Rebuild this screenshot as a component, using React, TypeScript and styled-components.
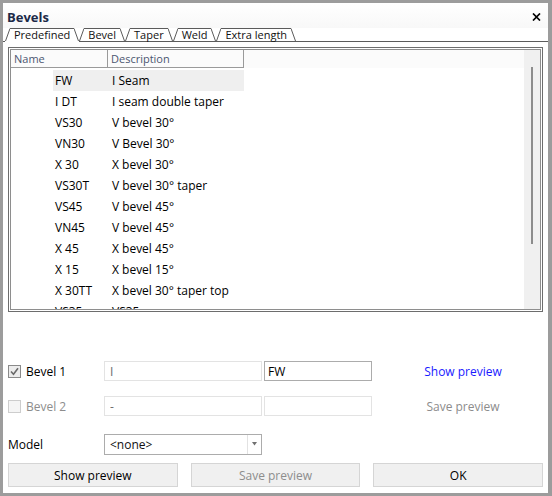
import React from "react";
import styled, { createGlobalStyle } from "styled-components";

const GlobalStyle = createGlobalStyle`
  html, body {
    margin: 0;
    padding: 0;
    background: #fff;
  }
  body {
    font-family: "Open Sans", "Noto Sans", sans-serif;
    font-size: 12px;
    color: #000;
  }
  * {
    box-sizing: border-box;
  }
`

const Window = styled.div`
  width: 552px;
  height: 496px;
  border: 3px solid #9c9c9c;
  border-right-width: 4px;
  background: #fff;
  display: flex;
  flex-direction: column;
`

const TitleBar = styled.div`
  height: 25px;
  display: flex;
  align-items: center;
  justify-content: space-between;
  padding: 2px 7px 0 4px;
  background: linear-gradient(#ffffff, #f8f8f8);
`

const Title = styled.div`
  font-size: 13px;
  font-weight: 700;
  color: #1c2a48;
`

const TabStrip = styled.div`
  height: 14px;
  display: flex;
  align-items: flex-end;
  padding-left: 2px;
  border-bottom: 1px solid #5b5b5b;
`

const TabWrap = styled.div<{ $active?: boolean }>`
  display: flex;
  height: ${p => (p.$active ? "14px" : "13px")};
  margin-bottom: ${p => (p.$active ? "-1px" : "0")};
  background: #fff;
  border-bottom: ${p => (p.$active ? "1px solid #fff" : "none")};
`

const TabLabel = styled.div`
  border-top: 1px solid #5b5b5b;
  padding: 0 4px;
  font-size: 11px;
  line-height: 12px;
  color: #111;
`

const Content = styled.div`
  flex: 1;
  display: flex;
  flex-direction: column;
  padding: 5px 5px 6px 5px;
`

const ListFrame = styled.div`
  height: 265px;
  border: 1px solid #6d6d6d;
  padding: 1px;
`

const ListInner = styled.div`
  height: 100%;
  border: 1px solid #8e8e8e;
  display: flex;
  overflow: hidden;
`

const ListBody = styled.div`
  flex: 1;
  overflow: hidden;
`

const Header = styled.div`
  display: flex;
  height: 18px;
  background: #fbfbfb;
`

const HeaderCell = styled.div<{ $w: number }>`
  width: ${p => p.$w}px;
  height: 18px;
  border-right: 1px solid #9a9a9a;
  border-bottom: 1px solid #9a9a9a;
  padding-left: 3px;
  font-size: 11px;
  line-height: 17px;
  color: #4b5670;
`

const Rows = styled.div`
  padding-top: 2px;
`

const Row = styled.div`
  display: flex;
  height: 21px;
  padding-left: 42px;
`

const RowInner = styled.div<{ $selected?: boolean }>`
  display: flex;
  background: ${p => (p.$selected ? "#efefef" : "transparent")};
  line-height: 21px;
`

const NameCell = styled.div`
  width: 55px;
  padding-left: 2px;
  white-space: nowrap;
`

const DescCell = styled.div`
  width: 136px;
  padding-left: 4px;
  white-space: nowrap;
`

const Scrollbar = styled.div`
  width: 16px;
  background: #f0f0f0;
  padding: 17px 0 0 7px;
`

const Thumb = styled.div`
  width: 2px;
  height: 177px;
  background: #8c8c8c;
`

const Form = styled.div`
  margin-top: 49px;
  display: flex;
  flex-direction: column;
`

const FormRow = styled.div<{ $gap: number }>`
  display: flex;
  align-items: center;
  height: 20px;
  margin-bottom: ${p => p.$gap}px;
`

const CheckLabel = styled.label<{ $disabled?: boolean }>`
  width: 96px;
  display: flex;
  align-items: center;
  gap: 5px;
  color: ${p => (p.$disabled ? "#8d8d8d" : "#000")};
`

const PlainLabel = styled.div`
  width: 96px;
`

const TextBox = styled.input<{ $w: number; $strong?: boolean; $pad: number }>`
  width: ${p => p.$w}px;
  height: 20px;
  margin: 0;
  padding: 0 0 0 ${p => p.$pad}px;
  border: 1px solid ${p => (p.$strong ? "#acacac" : "#e3e3e3")};
  background: #fff;
  font-family: "Open Sans", "Noto Sans", sans-serif;
  font-size: 12px;
  color: ${p => (p.$strong ? "#000" : "#6d6d6d")};
  outline: none;
`

const Gap = styled.div`
  width: 2px;
`

const LinkCell = styled.div`
  flex: 1;
  padding-left: 11px;
  text-align: center;
`

const LinkText = styled.span<{ $disabled?: boolean }>`
  color: ${p => (p.$disabled ? "#8c8c8c" : "#1a1aff")};
  cursor: ${p => (p.$disabled ? "default" : "pointer")};
`

const Select = styled.div`
  width: 158px;
  height: 21px;
  border: 1px solid #acacac;
  display: flex;
  align-items: center;
  background: #fff;
`

const SelectValue = styled.div`
  flex: 1;
  padding-left: 5px;
  color: #111;
`

const SelectArrow = styled.div`
  width: 14px;
  height: 100%;
  border-left: 1px solid #e2e2e2;
  display: flex;
  align-items: center;
  justify-content: center;
`

const ButtonBar = styled.div`
  margin-top: 9px;
  display: grid;
  grid-template-columns: 1fr 1fr 1fr;
  column-gap: 13px;
`

const Button = styled.button<{ $disabled?: boolean }>`
  height: 24px;
  margin: 0;
  border: 1px solid #d5d5d5;
  background: #f0f0f0;
  font-family: "Open Sans", "Noto Sans", sans-serif;
  font-size: 12px;
  color: ${p => (p.$disabled ? "#8d8d8d" : "#000")};
`

const bevels: [string, string][] = [
    ["FW", "I Seam"],
    ["I DT", "I seam double taper"],
    ["VS30", "V bevel 30°"],
    ["VN30", "V Bevel 30°"],
    ["X 30", "X bevel 30°"],
    ["VS30T", "V bevel 30° taper"],
    ["VS45", "V bevel 45°"],
    ["VN45", "V bevel 45°"],
    ["X 45", "X bevel 45°"],
    ["X 15", "X bevel 15°"],
    ["X 30TT", "X bevel 30° taper top"],
    ["VS35", "VS35"],
]

const tabs = ["Predefined", "Bevel", "Taper", "Weld", "Extra length"]

const Tab = ({label, active}: { label: string, active?: boolean }) => (
    <TabWrap $active={active}>
        <svg width="5" height="13" style={{display: "block"}}>
            <line x1="0.5" y1="13" x2="5" y2="0.5" stroke="#5b5b5b" strokeWidth="1"/>
        </svg>
        <TabLabel>{label}</TabLabel>
        <svg width="5" height="13" style={{display: "block"}}>
            <line x1="0" y1="0.5" x2="4.5" y2="13" stroke="#5b5b5b" strokeWidth="1"/>
        </svg>
    </TabWrap>
)

const CheckBox = ({checked, disabled}: { checked?: boolean, disabled?: boolean }) => (
    <svg width="13" height="13">
        <rect x="0.5" y="0.5" width="12" height="12"
              fill={disabled ? "#f5f5f5" : "#ececec"}
              stroke={disabled ? "#cdcdcd" : "#8a8a8a"}/>
        {checked && <path d="M3 6.5 L5.5 9.2 L10 3.3" fill="none" stroke="#6a6a6a" strokeWidth="1.6"/>}
    </svg>
)

export default function App() {
    return (
        <>
            <GlobalStyle/>
            <Window>
                <TitleBar>
                    <Title>Bevels</Title>
                    <svg width="9" height="8" viewBox="0 0 9 8">
                        <path d="M1 0.5 L8 7.5 M8 0.5 L1 7.5" stroke="#000" strokeWidth="1.7"/>
                    </svg>
                </TitleBar>
                <TabStrip>
                    {tabs.map((t, i) => <Tab key={t} label={t} active={i === 0}/>)}
                </TabStrip>
                <Content>
                    <ListFrame>
                        <ListInner>
                            <ListBody>
                                <Header>
                                    <HeaderCell $w={97}>Name</HeaderCell>
                                    <HeaderCell $w={136}>Description</HeaderCell>
                                </Header>
                                <Rows>
                                    {bevels.map(([name, desc], i) => (
                                        <Row key={name + i}>
                                            <RowInner $selected={i === 0}>
                                                <NameCell>{name}</NameCell>
                                                <DescCell>{desc}</DescCell>
                                            </RowInner>
                                        </Row>
                                    ))}
                                </Rows>
                            </ListBody>
                            <Scrollbar>
                                <Thumb/>
                            </Scrollbar>
                        </ListInner>
                    </ListFrame>
                    <Form>
                        <FormRow $gap={15}>
                            <CheckLabel>
                                <CheckBox checked/>
                                Bevel 1
                            </CheckLabel>
                            <TextBox $w={158} $pad={5} readOnly value="I"/>
                            <Gap/>
                            <TextBox $w={108} $pad={3} $strong readOnly value="FW"/>
                            <LinkCell><LinkText>Show preview</LinkText></LinkCell>
                        </FormRow>
                        <FormRow $gap={18}>
                            <CheckLabel $disabled>
                                <CheckBox disabled/>
                                Bevel 2
                            </CheckLabel>
                            <TextBox $w={158} $pad={5} readOnly value="-"/>
                            <Gap/>
                            <TextBox $w={108} $pad={3} readOnly value=""/>
                            <LinkCell><LinkText $disabled>Save preview</LinkText></LinkCell>
                        </FormRow>
                        <FormRow $gap={0}>
                            <PlainLabel>Model</PlainLabel>
                            <Select>
                                <SelectValue>&lt;none&gt;</SelectValue>
                                <SelectArrow>
                                    <svg width="5" height="4" viewBox="0 0 5 4">
                                        <path d="M0 0 H5 L2.5 3.5 Z" fill="#707070"/>
                                    </svg>
                                </SelectArrow>
                            </Select>
                        </FormRow>
                        <ButtonBar>
                            <Button>Show preview</Button>
                            <Button $disabled>Save preview</Button>
                            <Button>OK</Button>
                        </ButtonBar>
                    </Form>
                </Content>
            </Window>
        </>
    )
}
